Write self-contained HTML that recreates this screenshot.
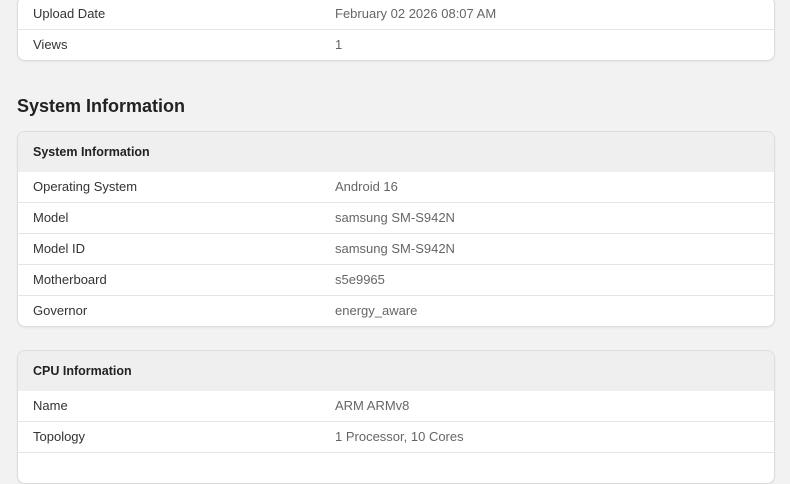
<!DOCTYPE html>
<html><head><style>
body{margin:0;background:#f2f2f2;font-family:"Liberation Sans",Arial,sans-serif;font-size:13px;color:#333;width:790px;height:444px;overflow:hidden;position:relative}
.card{position:absolute;left:17px;width:756px;background:#fff;border:1px solid #dcdcdc;border-radius:8px;overflow:hidden;box-shadow:0 1px 2px rgba(0,0,0,.05)}
.row{height:30px;line-height:30px;border-top:1px solid #e6e6e6;position:relative}
.row:first-child{border-top:none}
.l{position:absolute;left:15px;color:#333}
.v{position:absolute;left:317px;color:#666}
.hd{height:40px;line-height:40px;background:#efefef;font-weight:bold;padding-left:15px;color:#222;font-size:12.5px}
h2{position:absolute;left:17px;top:96px;margin:0;font-size:18px;font-weight:bold;color:#222}
</style></head><body>
<div class="card" style="top:-4px">
<div class="row" style="height:32px;line-height:34px"><span class="l">Upload Date</span><span class="v">February 02 2026 08:07 AM</span></div>
<div class="row"><span class="l">Views</span><span class="v">1</span></div>
</div>
<h2>System Information</h2>
<div class="card" style="top:131px">
<div class="hd">System Information</div>
<div class="row" style="border-top:none"><span class="l">Operating System</span><span class="v">Android 16</span></div>
<div class="row"><span class="l">Model</span><span class="v">samsung SM-S942N</span></div>
<div class="row"><span class="l">Model ID</span><span class="v">samsung SM-S942N</span></div>
<div class="row"><span class="l">Motherboard</span><span class="v">s5e9965</span></div>
<div class="row"><span class="l">Governor</span><span class="v">energy_aware</span></div>
</div>
<div class="card" style="top:350px">
<div class="hd">CPU Information</div>
<div class="row" style="border-top:none"><span class="l">Name</span><span class="v">ARM ARMv8</span></div>
<div class="row"><span class="l">Topology</span><span class="v">1 Processor, 10 Cores</span></div>
<div class="row"></div>
</div>
</body></html>
